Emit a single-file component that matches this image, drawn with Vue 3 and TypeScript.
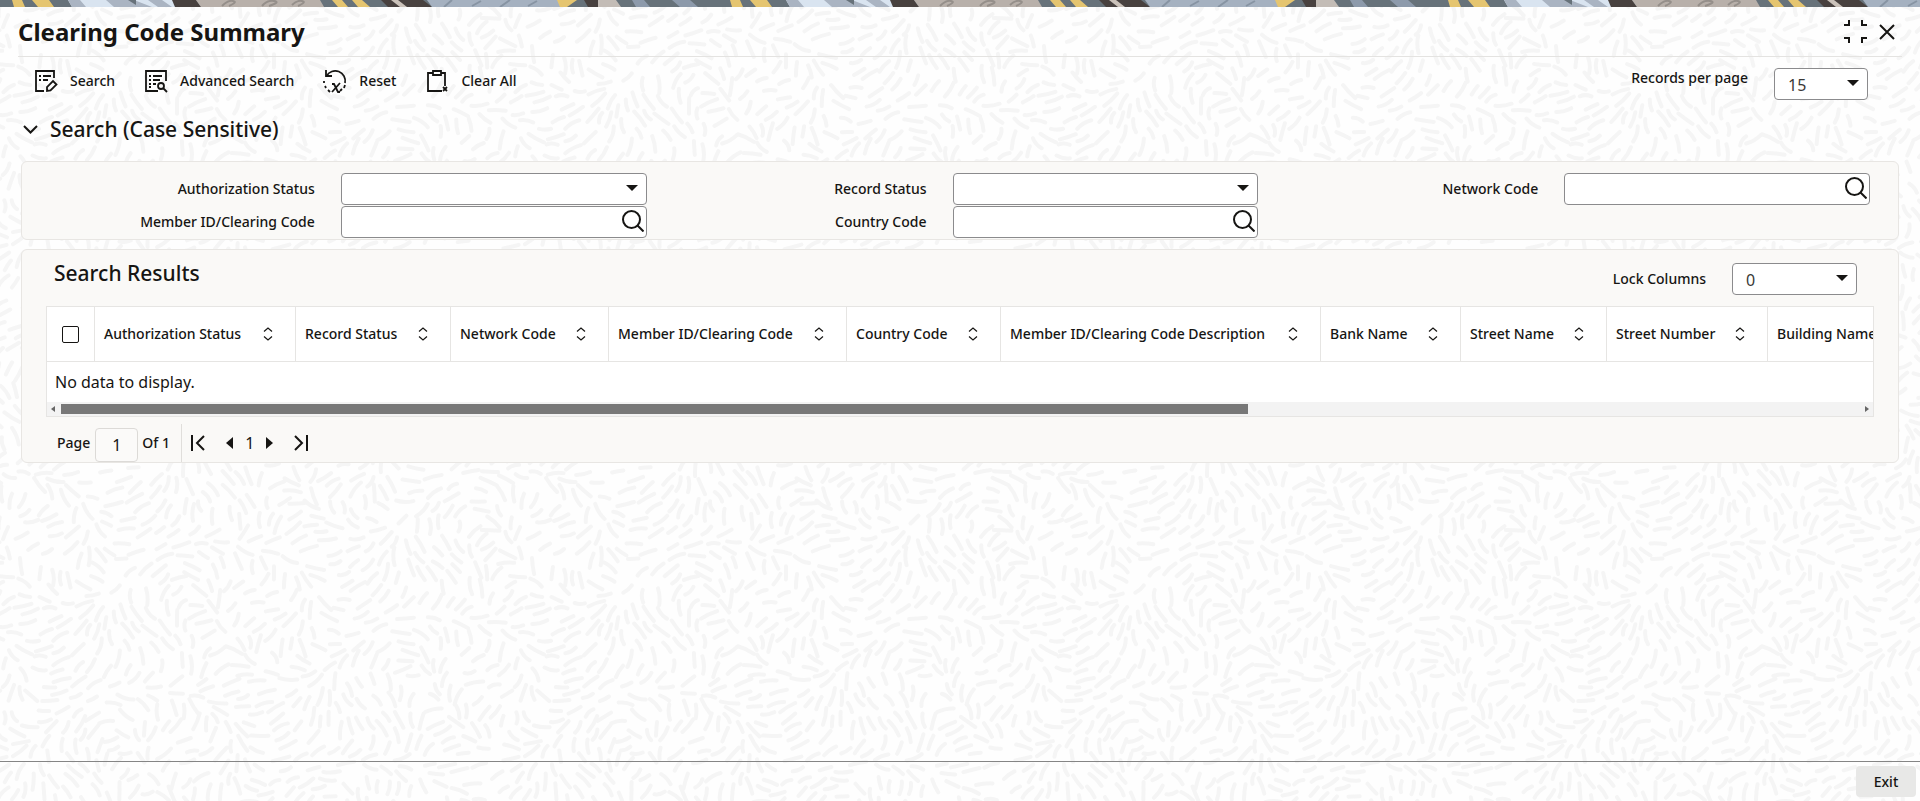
<script setup lang="ts">
import { ref } from 'vue'

interface Field {
  id: string
  label: string
  kind: 'select' | 'lookup'
}

interface Column {
  title: string
  width: number
}

const fields: Field[] = [
  { id: 'auth-status', label: 'Authorization Status', kind: 'select' },
  { id: 'record-status', label: 'Record Status', kind: 'select' },
  { id: 'network-code', label: 'Network Code', kind: 'lookup' },
  { id: 'member-id', label: 'Member ID/Clearing Code', kind: 'lookup' },
  { id: 'country-code', label: 'Country Code', kind: 'lookup' },
]

const columns: Column[] = [
  { title: 'Authorization Status', width: 201 },
  { title: 'Record Status', width: 155 },
  { title: 'Network Code', width: 158 },
  { title: 'Member ID/Clearing Code', width: 238 },
  { title: 'Country Code', width: 154 },
  { title: 'Member ID/Clearing Code Description', width: 320 },
  { title: 'Bank Name', width: 140 },
  { title: 'Street Name', width: 146 },
  { title: 'Street Number', width: 161 },
  { title: 'Building Name', width: 160 },
]

const values = ref<Record<string, string>>({})
const perPage = ref('15')
const lockColumns = ref('0')
const pageNumber = ref('1')
const expanded = ref(true)

// Short brush strokes that follow a smooth, tileable direction field.
const TILE = 512

function buildStrokes(): string {
  let seed = 20231
  const random = (): number => {
    seed = (seed * 1664525 + 1013904223) % 4294967296
    return seed / 4294967296
  }
  const k = (2 * Math.PI) / TILE
  const direction = (x: number, y: number): number =>
    1.3 * Math.sin(k * (2 * x + y)) +
    1.2 * Math.cos(k * (3 * y - x)) +
    0.7 * Math.sin(k * (3 * x - 2 * y) + 1)
  const wrap = (d: number): number => d - TILE * Math.round(d / TILE)
  const placed: { x: number; y: number; c: number; s: number }[] = []
  for (let i = 0; i < 14000; i++) {
    const x = random() * TILE
    const y = random() * TILE
    const a = direction(x, y) + (random() - 0.5) * 0.3
    const c = Math.cos(a)
    const s = Math.sin(a)
    const clash = placed.some((p) => {
      const dx = wrap(p.x - x)
      const dy = wrap(p.y - y)
      const along = (dx * c + dy * s) / 20
      const across = (dy * c - dx * s) / 8
      return along * along + across * across < 1
    })
    if (!clash) placed.push({ x, y, c, s })
  }
  let d = ''
  for (const p of placed) {
    const half = 5 + random() * 4
    const bend = (random() - 0.5) * 5
    for (const ox of [-TILE, 0, TILE]) {
      for (const oy of [-TILE, 0, TILE]) {
        const x = p.x + ox
        const y = p.y + oy
        if (x < -12 || y < -12 || x > TILE + 12 || y > TILE + 12) continue
        const f = (n: number): string => n.toFixed(1)
        d +=
          `M${f(x - half * p.c)} ${f(y - half * p.s)}` +
          `Q${f(x - bend * p.s)} ${f(y + bend * p.c)} ${f(x + half * p.c)} ${f(y + half * p.s)}`
      }
    }
  }
  return d
}

const strokes = buildStrokes()
</script>

<template>
  <div class="page">
    <svg class="texture" aria-hidden="true">
      <defs>
        <pattern id="strokes" :width="TILE" :height="TILE" patternUnits="userSpaceOnUse">
          <path :d="strokes" fill="none" stroke="#f5f5f5" stroke-width="4" stroke-linecap="round" />
        </pattern>
      </defs>
      <rect width="100%" height="100%" fill="url(#strokes)" />
    </svg>

    <svg class="banner" aria-hidden="true">
      <defs>
        <pattern id="ribbon" width="718" height="7" patternUnits="userSpaceOnUse">
          <rect width="718" height="7" fill="#67727a" />
          <path d="M12 0h10l3 7h-11zM32 0h17l5 7h-16z" fill="#e5c570" />
          <path d="M68 0h107l3 7h-106z" fill="#d9e4f0" />
          <path d="M68 0h12l6 7h-14zM106 0h28l18 7h-38zM148 0h14l10 7h-14z" fill="#aab4c2" />
          <path d="M128 0h8v5z" fill="#67727a" />
          <path d="M172 0h24l5 7h-26z" fill="#48413f" />
          <path d="M196 0h124l4 7h-123z" fill="#b8b0aa" />
          <path d="M222 6q6-6 11-5t-4 5M262 6q5-6 12-5t-5 5M292 5q5-5 10-4t-4 5" fill="none" stroke="#958f8a" stroke-width="2" />
          <path d="M332 0h10l6 7h-10zM352 0h10l8 7h-12z" fill="#e5c570" />
          <path d="M381 0h42l9 7h-44z" fill="#48413f" />
          <path d="M391 0h7l9 7h-7z" fill="#cbc2ba" />
          <path d="M427 0h132l4 7h-131z" fill="#a5b1c0" />
          <path d="M444 7l8-7M472 6l9-5M500 7l10-7M528 6l9-5" stroke="#8794a3" stroke-width="2" />
          <path d="M557 0h20l-10 7h-7z" fill="#e5c570" />
          <path d="M584 0h14v7h-10z" fill="#48413f" />
          <path d="M598 0h18l5 7h-23z" fill="#c3bcb6" />
          <path d="M632 0h12l6 7h-14zM672 0h18l8 7h-18z" fill="#8d9aab" />
        </pattern>
      </defs>
      <rect width="100%" height="7" fill="url(#ribbon)" />
    </svg>

    <header class="title-bar">
      <h1>Clearing Code Summary</h1>
      <div class="window-actions">
        <button type="button" aria-label="Collapse">
          <svg width="25" height="25" viewBox="0 0 25 25" fill="none" stroke="#161513" stroke-width="2">
            <path d="M1 6h5V1M24 6h-5V1M1 19h5v5M24 19h-5v5" />
          </svg>
        </button>
        <button type="button" aria-label="Close">
          <svg width="16" height="16" viewBox="0 0 16 16" fill="none" stroke="#161513" stroke-width="2">
            <path d="M1 1l14 14M15 1L1 15" />
          </svg>
        </button>
      </div>
    </header>

    <div class="toolbar">
      <div class="actions">
        <button type="button">
          <svg width="24" height="24" viewBox="0 0 24 24" fill="none" stroke="#161513" stroke-width="1.800">
            <path d="M20 9V2H2v20h8M5 7h2M9 7h8M5 11h2M9 11h5" />
            <path d="M13 22v-4l6-6 3.500 3.500-6 6z" />
          </svg>
          Search
        </button>
        <button type="button">
          <svg width="24" height="24" viewBox="0 0 24 24" fill="none" stroke="#161513" stroke-width="1.800">
            <path d="M22 12V2H2v20h12M5 7h2M9 7h9M5 11h2M9 11h7M5 15h2M9 15h3M5 18h2" />
            <circle cx="17" cy="17" r="3" />
            <path d="M19 19l4 4" />
          </svg>
          Advanced Search
        </button>
        <button type="button">
          <svg width="24" height="24" viewBox="0 0 24 24" fill="none" stroke="#161513" stroke-width="1.800">
            <path d="M3 1v6h6" />
            <path d="M3.500 7A10 10 0 0 1 22 14" />
            <path d="M1 12v2M2 17l1 2M5 21l2 2M22 16l-1 3M19 20l-2 2" />
            <path d="M9 15h2l4 8h2M17 14l-8 9" />
          </svg>
          Reset
        </button>
        <button type="button">
          <svg width="24" height="24" viewBox="0 0 24 24" fill="none" stroke="#161513" stroke-width="1.800">
            <path d="M8 4H3v18h14M16 4h4v13" />
            <path d="M8 2h8v4H8z" />
            <path d="M18 18l4 4M22 18l-4 4" />
          </svg>
          Clear All
        </button>
      </div>
      <div class="per-page">
        <label for="per-page">Records per page</label>
        <div class="picker">
          <select id="per-page" v-model="perPage">
            <option>15</option>
            <option>30</option>
          </select>
          <svg class="caret" width="12" height="6" viewBox="0 0 12 6"><path d="M0 0h12L6 6z" fill="#161513" /></svg>
        </div>
      </div>
    </div>

    <main>
      <h2 class="section-heading">
        <button type="button" :aria-expanded="expanded" @click="expanded = !expanded">
          <svg width="15" height="9" viewBox="0 0 15 9" fill="none" stroke="#161513" stroke-width="2">
            <path d="M1 1l6.500 6.500L14 1" />
          </svg>
          Search (Case Sensitive)
        </button>
      </h2>

      <form v-if="expanded" class="panel criteria" @submit.prevent>
        <div v-for="field in fields" :key="field.id" class="field">
          <label :for="field.id">{{ field.label }}</label>
          <div v-if="field.kind === 'select'" class="picker">
            <select :id="field.id" v-model="values[field.id]">
              <option value=""></option>
            </select>
            <svg class="caret" width="12" height="6" viewBox="0 0 12 6"><path d="M0 0h12L6 6z" fill="#161513" /></svg>
          </div>
          <div v-else class="lookup">
            <input :id="field.id" v-model="values[field.id]" type="text" />
            <button type="button" :aria-label="'Look up ' + field.label">
              <svg width="22" height="22" viewBox="0 0 22 22" fill="none" stroke="#161513" stroke-width="2">
                <circle cx="9.500" cy="9.500" r="8.500" />
                <path d="M15.500 15.500l6 6" />
              </svg>
            </button>
          </div>
        </div>
      </form>

      <section class="panel results">
        <div class="results-head">
          <h2>Search Results</h2>
          <div class="lock">
            <label for="lock-columns">Lock Columns</label>
            <div class="picker">
              <select id="lock-columns" v-model="lockColumns">
                <option>0</option>
                <option>1</option>
              </select>
              <svg class="caret" width="12" height="6" viewBox="0 0 12 6"><path d="M0 0h12L6 6z" fill="#161513" /></svg>
            </div>
          </div>
        </div>

        <div class="grid-frame">
          <div class="grid-view">
            <table>
              <colgroup>
                <col class="tick-col" />
                <col v-for="c in columns" :key="c.title" :style="{ width: c.width + 'px' }" />
              </colgroup>
              <thead>
                <tr>
                  <th class="tick"><input type="checkbox" aria-label="Select all rows" /></th>
                  <th v-for="c in columns" :key="c.title" scope="col">
                    <div class="head-cell">
                      {{ c.title }}
                      <svg width="10" height="14" viewBox="0 0 10 14" fill="none" stroke="#161513" stroke-width="1.200">
                        <path d="M1 4.500L5 1l4 3.500M1 9.500L5 13l4-3.500" />
                      </svg>
                    </div>
                  </th>
                </tr>
              </thead>
              <tbody>
                <tr>
                  <td :colspan="columns.length + 1">No data to display.</td>
                </tr>
              </tbody>
            </table>
          </div>
          <div class="scrollbar">
            <svg width="4" height="6" viewBox="0 0 4 6"><path d="M4 0v6L0 3z" fill="#666" /></svg>
            <div class="track"><div class="thumb"></div></div>
            <svg width="4" height="6" viewBox="0 0 4 6"><path d="M0 0v6l4-3z" fill="#666" /></svg>
          </div>
        </div>

        <nav class="pager" aria-label="Result pages">
          <label for="page-number">Page</label>
          <input id="page-number" v-model="pageNumber" type="text" />
          <span class="of">Of 1</span>
          <div class="steps">
            <button type="button" aria-label="First page">
              <svg width="14" height="16" viewBox="0 0 14 16" fill="none" stroke="#161513" stroke-width="2">
                <path d="M1 0v16M13 1L6 8l7 7" />
              </svg>
            </button>
            <button type="button" class="previous" aria-label="Previous page">
              <svg width="7" height="12" viewBox="0 0 7 12"><path d="M7 0v12L0 6z" fill="#161513" /></svg>
            </button>
            <span class="current">1</span>
            <button type="button" aria-label="Next page">
              <svg width="7" height="12" viewBox="0 0 7 12"><path d="M0 0v12l7-6z" fill="#161513" /></svg>
            </button>
            <button type="button" class="last" aria-label="Last page">
              <svg width="14" height="16" viewBox="0 0 14 16" fill="none" stroke="#161513" stroke-width="2">
                <path d="M13 0v16M1 1l7 7-7 7" />
              </svg>
            </button>
          </div>
        </nav>
      </section>
    </main>

    <footer>
      <button type="button">Exit</button>
    </footer>
  </div>
</template>

<style>
body {
  background: #fefefe;
}
</style>

<style scoped>
.page,
.page * {
  box-sizing: border-box;
}
.page {
  position: relative;
  isolation: isolate;
  display: flex;
  flex-direction: column;
  min-height: 100vh;
  color: #161513;
  font: 500 14px/20px 'Noto Sans', 'Open Sans', sans-serif;
}
.texture {
  position: absolute;
  inset: 0;
  z-index: -1;
  width: 100%;
  height: 100%;
}
svg {
  display: block;
  flex: none;
}
button,
input,
select {
  font: inherit;
  color: inherit;
}
button {
  padding: 0;
  border: 0;
  background: none;
  cursor: pointer;
}
h1,
h2 {
  margin: 0;
}
.banner {
  width: 100%;
  height: 7px;
}
.title-bar {
  display: flex;
  align-items: center;
  justify-content: space-between;
  height: 50px;
  margin: 0 18px;
  padding: 0 7px 0 0;
  border-bottom: 1px solid #e4e3e1;
}
h1 {
  font-size: 24px;
  line-height: 32px;
  font-weight: 700;
}
.window-actions {
  display: flex;
  align-items: center;
  gap: 11px;
}
.toolbar {
  display: flex;
  justify-content: space-between;
  margin: 0 52px 0 34px;
  padding-top: 11px;
}
.actions {
  display: flex;
  align-items: flex-start;
  gap: 29px;
}
.actions button {
  display: flex;
  align-items: center;
  gap: 12px;
  height: 26px;
}
.per-page {
  display: flex;
  gap: 26px;
}
.per-page .picker {
  width: 94px;
}
.picker,
.lookup {
  position: relative;
  height: 32px;
}
.picker select,
.lookup input {
  display: block;
  width: 100%;
  height: 32px;
  padding: 2px 13px 0;
  border: 1px solid #8b8b8d;
  border-radius: 4px;
  background: #fff;
  font-size: 16px;
  font-weight: 400;
  appearance: none;
}
.picker select {
  color: #3a3937;
}
.caret {
  position: absolute;
  right: 9px;
  top: 12px;
  pointer-events: none;
}
.lookup button {
  position: absolute;
  right: 3px;
  top: 4px;
}
main {
  flex: 1;
  padding: 0 21px;
}
.section-heading {
  padding: 13px 0 16px 2px;
}
.section-heading button {
  display: flex;
  align-items: center;
  gap: 12px;
}
.section-heading button,
.results h2 {
  font-size: 21px;
  line-height: 32px;
  font-weight: 500;
}
.panel {
  border: 1px solid #e8e6e3;
  border-radius: 6px;
  background: #faf9f7;
}
.criteria {
  display: grid;
  grid-template-columns: repeat(3, 1fr);
  row-gap: 1px;
  padding: 11px 28px 1px 13px;
}
.field {
  display: grid;
  grid-template-columns: 1fr 50%;
  column-gap: 26px;
  align-items: center;
}
.field label {
  text-align: right;
}
.results {
  margin-top: 9px;
  padding: 0 24px;
}
.results-head {
  display: flex;
  justify-content: space-between;
  padding: 7px 17px 11px 8px;
}
.lock {
  display: flex;
  align-items: center;
  gap: 26px;
  padding-top: 6px;
}
.lock .picker {
  width: 125px;
}
.grid-frame {
  border: 1px solid #e6e5e3;
  background: #fff;
}
.grid-view {
  overflow: hidden;
}
table {
  width: 1881px;
  border-collapse: separate;
  border-spacing: 0;
  table-layout: fixed;
}
.tick-col {
  width: 48px;
}
th {
  height: 55px;
  padding: 0 22px 0 9px;
  border-right: 1px solid #e6e5e3;
  border-bottom: 1px solid #e6e5e3;
  font-weight: 500;
  text-align: left;
  white-space: nowrap;
}
.head-cell {
  display: flex;
  align-items: center;
  justify-content: space-between;
}
th.tick {
  padding: 0 0 0 15px;
}
.tick input {
  display: block;
  width: 17px;
  height: 17px;
  margin: 0;
  border: 1px solid #161513;
  border-radius: 2px;
  background: #fff;
  appearance: none;
}
td {
  height: 40px;
  padding: 0 8px;
  font-size: 16px;
  font-weight: 400;
}
.scrollbar {
  display: flex;
  align-items: center;
  gap: 6px;
  height: 14px;
  padding: 0 4px;
  background: #f3f3f3;
}
.track {
  flex: 1;
}
.thumb {
  width: 66%;
  height: 10px;
  background: #787878;
}
.pager {
  display: flex;
  align-items: center;
  padding: 7px 0 0 11px;
}
.pager input {
  width: 43px;
  height: 34px;
  margin: 4px 4px 0 5px;
  padding: 0;
  border: 1px solid #dcdad7;
  border-radius: 4px;
  background: #fbfaf9;
  font-size: 16px;
  font-weight: 400;
  text-align: center;
}
.of {
  width: 39px;
}
.steps {
  display: flex;
  align-items: center;
  height: 38px;
  padding-left: 9px;
  border-left: 1px solid #e0dedb;
}
.previous {
  margin-left: 21px;
}
.current {
  padding: 0 12px;
  font-size: 16px;
  font-weight: 400;
}
.last {
  margin-left: 21px;
}
footer {
  display: flex;
  justify-content: flex-end;
  padding: 4px;
  border-top: 1px solid #858585;
}
footer button {
  width: 60px;
  height: 31px;
  border-radius: 4px;
  background: #e8e8e7;
}
</style>
